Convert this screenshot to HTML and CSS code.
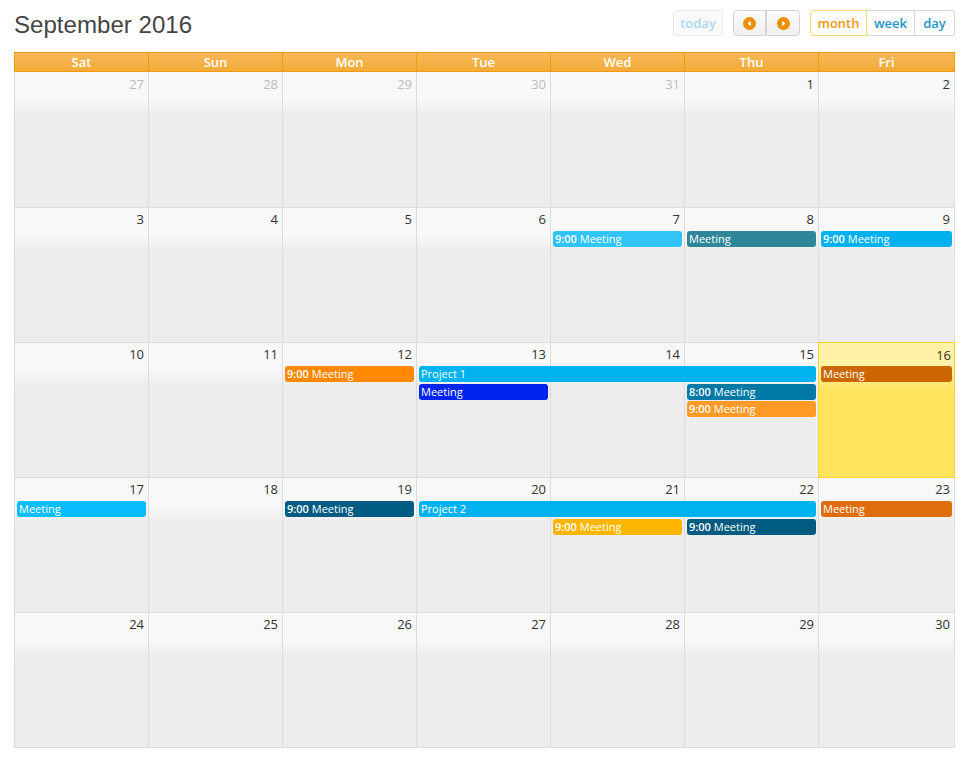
FILE: index.html
```html
<!DOCTYPE html>
<html>
<head>
<meta charset="utf-8">
<link rel="stylesheet" href="styles.css">
</head>
<body>
<div class="cal">
  <div class="toolbar">
    <h2 class="title">September 2016</h2>
    <div class="right">
      <button class="btn today" disabled>today</button>
      <div class="group nav">
        <button class="btn icon"><svg width="13" height="13" viewBox="0 0 13 13"><circle cx="6.5" cy="6.5" r="6.5" fill="#f08c00"/><path d="M7.8 3.8 L4.6 6.5 L7.8 9.2 Z" fill="#fff"/></svg></button>
        <button class="btn icon"><svg width="13" height="13" viewBox="0 0 13 13"><circle cx="6.5" cy="6.5" r="6.5" fill="#f08c00"/><path d="M5.2 3.8 L8.4 6.5 L5.2 9.2 Z" fill="#fff"/></svg></button>
      </div>
      <div class="group">
        <button class="btn view active">month</button>
        <button class="btn view">week</button>
        <button class="btn view">day</button>
      </div>
    </div>
  </div>

  <div class="grid">
    <div class="head">
      <div>Sat</div><div>Sun</div><div>Mon</div><div>Tue</div><div>Wed</div><div>Thu</div><div>Fri</div>
    </div>

    <div class="week first">
      <div class="day c1 other"><span>27</span></div>
      <div class="day c2 other"><span>28</span></div>
      <div class="day c3 other"><span>29</span></div>
      <div class="day c4 other"><span>30</span></div>
      <div class="day c5 other"><span>31</span></div>
      <div class="day c6"><span>1</span></div>
      <div class="day c7"><span>2</span></div>
    </div>

    <div class="week">
      <div class="day c1"><span>3</span></div>
      <div class="day c2"><span>4</span></div>
      <div class="day c3"><span>5</span></div>
      <div class="day c4"><span>6</span></div>
      <div class="day c5"><span>7</span></div>
      <div class="day c6"><span>8</span></div>
      <div class="day c7"><span>9</span></div>
      <div class="ev r1 s5 e6" style="background:#31c4f7"><b>9:00</b> Meeting</div>
      <div class="ev r1 s6 e7" style="background:#2f8699">Meeting</div>
      <div class="ev r1 s7 e8" style="background:#00b1ef"><b>9:00</b> Meeting</div>
    </div>

    <div class="week">
      <div class="day c1"><span>10</span></div>
      <div class="day c2"><span>11</span></div>
      <div class="day c3"><span>12</span></div>
      <div class="day c4"><span>13</span></div>
      <div class="day c5"><span>14</span></div>
      <div class="day c6"><span>15</span></div>
      <div class="day c7 today-cell"><span>16</span></div>
      <div class="ev r1 s3 e4" style="background:#ff8800"><b>9:00</b> Meeting</div>
      <div class="ev r1 s4 e7" style="background:#00b2ef">Project 1</div>
      <div class="ev r2 s4 e5" style="background:#0024ef">Meeting</div>
      <div class="ev r2 s6 e7" style="background:#0079a7"><b>8:00</b> Meeting</div>
      <div class="ev r3 s6 e7" style="background:#ff9a26"><b>9:00</b> Meeting</div>
      <div class="ev r1 s7 e8" style="background:#cc6600">Meeting</div>
    </div>

    <div class="week">
      <div class="day c1"><span>17</span></div>
      <div class="day c2"><span>18</span></div>
      <div class="day c3"><span>19</span></div>
      <div class="day c4"><span>20</span></div>
      <div class="day c5"><span>21</span></div>
      <div class="day c6"><span>22</span></div>
      <div class="day c7"><span>23</span></div>
      <div class="ev r1 s1 e2" style="background:#08bdfb">Meeting</div>
      <div class="ev r1 s3 e4" style="background:#005c82"><b>9:00</b> Meeting</div>
      <div class="ev r1 s4 e7" style="background:#00b2ef">Project 2</div>
      <div class="ev r2 s5 e6" style="background:#ffb600"><b>9:00</b> Meeting</div>
      <div class="ev r2 s6 e7" style="background:#005b80"><b>9:00</b> Meeting</div>
      <div class="ev r1 s7 e8" style="background:#e06d0b">Meeting</div>
    </div>

    <div class="week">
      <div class="day c1"><span>24</span></div>
      <div class="day c2"><span>25</span></div>
      <div class="day c3"><span>26</span></div>
      <div class="day c4"><span>27</span></div>
      <div class="day c5"><span>28</span></div>
      <div class="day c6"><span>29</span></div>
      <div class="day c7"><span>30</span></div>
    </div>
  </div>
</div>
</body>
</html>
```

FILE: styles.css
```css
html, body {
  margin: 0;
  padding: 0;
  background: #fff;
}
.cal {
  padding: 10px 13px 0 14px;
  font-family: "Open Sans", "DejaVu Sans", sans-serif;
}
.toolbar {
  display: flex;
  justify-content: space-between;
  align-items: center;
  height: 26px;
  margin-bottom: 16px;
}
.title {
  margin: 4px 0 0 0;
  font-family: "Liberation Sans", Arial, sans-serif;
  font-weight: normal;
  font-size: 24.1px;
  color: #444;
}
.right {
  display: flex;
  align-items: center;
  gap: 10px;
}
.group {
  display: flex;
}
.btn {
  height: 26px;
  margin: 0;
  padding: 0 8px;
  border: 1px solid #d4d4d4;
  background: linear-gradient(#fbfbfb, #efefef);
  font-family: "Open Sans", "DejaVu Sans", sans-serif;
  font-size: 13px;
  font-weight: 600;
  color: #1b95c7;
  border-radius: 4px;
  line-height: 24px;
  display: flex;
  align-items: center;
  justify-content: center;
}
.btn.today {
  width: 50px;
  color: #a9d9ec;
  border-color: #e8e8e8;
  background: #fafafa;
}
.group .btn {
  border-radius: 0;
}
.group .btn + .btn {
  border-left: none;
}
.group .btn:first-child {
  border-radius: 4px 0 0 4px;
}
.group .btn:last-child {
  border-radius: 0 4px 4px 0;
}
.btn.icon {
  width: 33px;
  padding: 0;
}
.group .btn.icon + .btn.icon {
  border-left: 1px solid #d4d4d4;
  width: 34px;
}
.btn.view {
  background: #fff;
  padding: 0;
}
.btn.view:nth-child(1) { width: 57px; }
.btn.view:nth-child(2) { width: 48px; }
.btn.view:nth-child(3) { width: 40px; }
.btn.view.active {
  color: #f29b11;
  border: 1px solid #fbd86a;
  background: #fff;
}

.grid {
  width: 940px;
  border-right: 1px solid #dcdcdc;
}
.head {
  display: grid;
  grid-template-columns: repeat(6, 134px) 136px;
  height: 18px;
  border-top: 1px solid #f09a0f;
  border-bottom: 1px solid #f09a0f;
  border-right: 1px solid #f09a0f;
  background: linear-gradient(#f7b858, #f4ab37);
  margin-right: -1px;
}
.head div {
  color: #fff;
  font-size: 13px;
  font-weight: 600;
  text-align: center;
  line-height: 18px;
  border-left: 1px solid #f09a0f;
}
.week {
  display: grid;
  grid-template-columns: repeat(6, 134px) 136px;
  grid-template-rows: 23px 18px 17px 17px 1fr;
  height: 135px;
}
.week.first {
  height: 136px;
  grid-template-rows: 24px 18px 17px 17px 1fr;
}
.day {
  grid-row: 1 / -1;
  border-left: 1px solid #dcdcdc;
  border-bottom: 1px solid #dcdcdc;
  background: linear-gradient(#f8f8f8 0, #f8f8f8 26px, #ededed 44px, #ededed 100%);
  text-align: right;
  padding: 2px 4px 0 0;
  font-size: 13px;
  color: #333;
}
.week.first .day {
  padding-top: 3px;
}
.day span {
  display: block;
  line-height: 18px;
}
.day.other {
  color: #bbb;
}
.day.today-cell {
  background: linear-gradient(#fff2a6 0, #fff2a6 26px, #ffe35c 48px, #ffe35c 100%);
  border: 1px solid #fad232;
  margin-top: -1px;
  padding-top: 3px;
  padding-right: 3px;
  margin-right: -1px;
}
.c1 { grid-column: 1; }
.c2 { grid-column: 2; }
.c3 { grid-column: 3; }
.c4 { grid-column: 4; }
.c5 { grid-column: 5; }
.c6 { grid-column: 6; }
.c7 { grid-column: 7; }

.ev {
  height: 16px;
  margin: 0 2px 0 3px;
  border-radius: 3px;
  color: #fff;
  font-size: 11px;
  line-height: 16px;
  padding-left: 2px;
  white-space: nowrap;
  overflow: hidden;
  z-index: 1;
}
.ev b {
  font-weight: 600;
}
.r1 { grid-row: 2; }
.r2 { grid-row: 3; }
.r3 { grid-row: 4; }
.s1 { grid-column-start: 1; }
.s3 { grid-column-start: 3; }
.s4 { grid-column-start: 4; }
.s5 { grid-column-start: 5; }
.s6 { grid-column-start: 6; }
.s7 { grid-column-start: 7; }
.e2 { grid-column-end: 2; }
.e4 { grid-column-end: 4; }
.e5 { grid-column-end: 5; }
.e6 { grid-column-end: 6; }
.e7 { grid-column-end: 7; }
.e8 { grid-column-end: 8; }
```
